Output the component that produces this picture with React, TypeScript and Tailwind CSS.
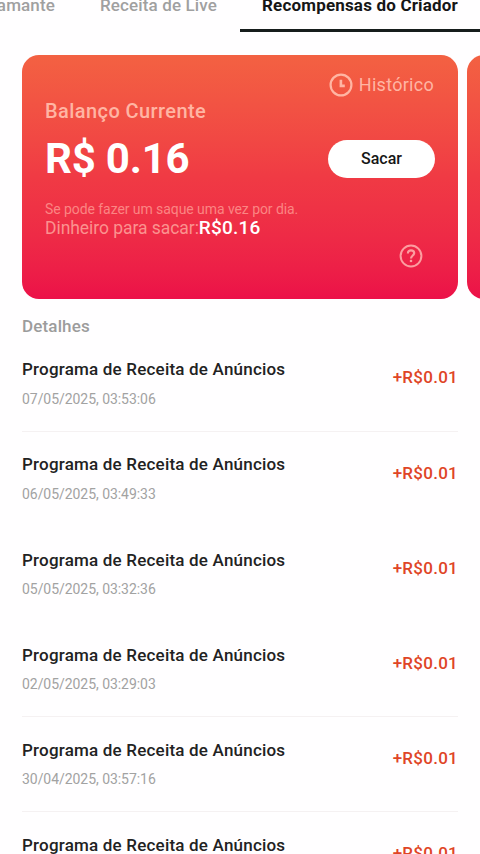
const ROWS = [
  { date: "07/05/2025, 03:53:06", divider: true },
  { date: "06/05/2025, 03:49:33", divider: false },
  { date: "05/05/2025, 03:32:36", divider: false },
  { date: "02/05/2025, 03:29:03", divider: true },
  { date: "30/04/2025, 03:57:16", divider: true },
];

function ClockIcon() {
  return (
    <svg viewBox="0 0 24 24" className="h-6 w-6" fill="none" stroke="currentColor">
      <circle cx="12" cy="12" r="10.4" strokeWidth="2.2" />
      <path d="M11.9 6.8V12.9H15.8" strokeWidth="2.6" />
    </svg>
  );
}

function HelpIcon() {
  return (
    <svg viewBox="0 0 24 24" className="h-6 w-6" fill="none" stroke="currentColor">
      <circle cx="12" cy="12" r="10.4" strokeWidth="2" />
      <path d="M8.9 9.4C8.9 7.4 10.2 6.4 12 6.4S15.2 7.5 15.2 9.1C15.2 11.4 12 11.7 12 14.5" strokeWidth="2.2" />
      <path d="M12 15.8V18.1" strokeWidth="2.3" />
    </svg>
  );
}

function Tabs() {
  return (
    <nav className="flex h-8 shrink-0 justify-end overflow-hidden text-[17px] font-medium leading-[10px] tracking-[0.13px] text-[#a0a0a0]">
      <div className="flex w-[78px] shrink-0 justify-end whitespace-nowrap pr-[23px]">Diamante</div>
      <div className="w-[162px] shrink-0 whitespace-nowrap pl-[22px]">Receita de Live</div>
      <div className="w-60 shrink-0 whitespace-nowrap border-b-[3px] border-[#161d1c] pl-[22px] font-bold tracking-[0.18px] text-[#161616]">
        Recompensas do Criador
      </div>
    </nav>
  );
}

function BalanceCard() {
  return (
    <div className="h-[244px] w-[436px] shrink-0 rounded-[17px] bg-linear-to-b from-[#f36142] via-[#f03a44] to-[#ec1048] px-[23px] pt-[18px] text-[#ffb5a3]">
      <div className="flex h-6 items-center justify-end gap-[6px] pr-px text-lg tracking-[0.28px]">
        <ClockIcon />
        <span>Histórico</span>
      </div>
      <div className="h-7 text-xl font-medium leading-7 tracking-[0.42px]">Balanço Currente</div>
      <div className="mt-[15px] flex h-[38px] items-center justify-between">
        <span className="text-[42px] font-bold leading-[38px] tracking-[-0.2px] text-white">R$ 0.16</span>
        <button className="h-[38px] w-[107px] rounded-full bg-white text-base font-medium text-[#161616]">
          Sacar
        </button>
      </div>
      <div className="mt-[21px] h-5 text-sm leading-5 tracking-[-0.07px] text-[#fb8583]">
        Se pode fazer um saque uma vez por dia.
      </div>
      <div className="flex h-[18px] items-center text-[17.5px] leading-[18px] text-[#fb928f]">
        <span className="tracking-[-0.05px]">Dinheiro para sacar:</span>
        <span className="text-[19px] font-medium tracking-[0.2px] text-white">R$0.16</span>
      </div>
      <div className="mt-[7px] flex justify-end pr-3 text-[#fc9da0]">
        <HelpIcon />
      </div>
    </div>
  );
}

function Row({ date, divider }: { date?: string; divider: boolean }) {
  return (
    <li
      className={`flex h-[95.1px] shrink-0 justify-between border-b ${
        divider ? "border-[#f5f1f2]" : "border-transparent"
      }`}
    >
      <div className="pt-[20.4px]">
        <div className="h-6 text-[17px] font-medium leading-6 tracking-[0.2px] text-[#222]">
          Programa de Receita de Anúncios
        </div>
        {date && (
          <div className="mt-[7.6px] h-5 text-sm leading-5 tracking-[-0.05px] text-[#a2a2a2]">{date}</div>
        )}
      </div>
      <div className="pt-[28.45px] text-[17px] font-medium leading-6 tracking-[0.26px] text-[#df4526]">+R$0.01</div>
    </li>
  );
}

export default function App() {
  return (
    <div className="flex h-[854px] w-[480px] flex-col overflow-hidden bg-[#fffeff] font-['Roboto',sans-serif]">
      <Tabs />

      <div className="mt-[23px] flex shrink-0 gap-[9px] overflow-hidden pl-[22px]">
        <BalanceCard />
        <div className="h-[244px] w-[436px] shrink-0 rounded-[17px] bg-linear-to-b from-[#f36142] via-[#f03a44] to-[#ec1048]" />
      </div>

      <section className="px-[22px] pt-[15px]">
        <h2 className="h-6 text-[17px] font-medium leading-6 tracking-[0.15px] text-[#9c9c9c]">Detalhes</h2>
        <ul className="mt-[-1px]">
          {ROWS.map((row) => (
            <Row key={row.date} date={row.date} divider={row.divider} />
          ))}
          <Row divider={false} />
        </ul>
      </section>
    </div>
  );
}
